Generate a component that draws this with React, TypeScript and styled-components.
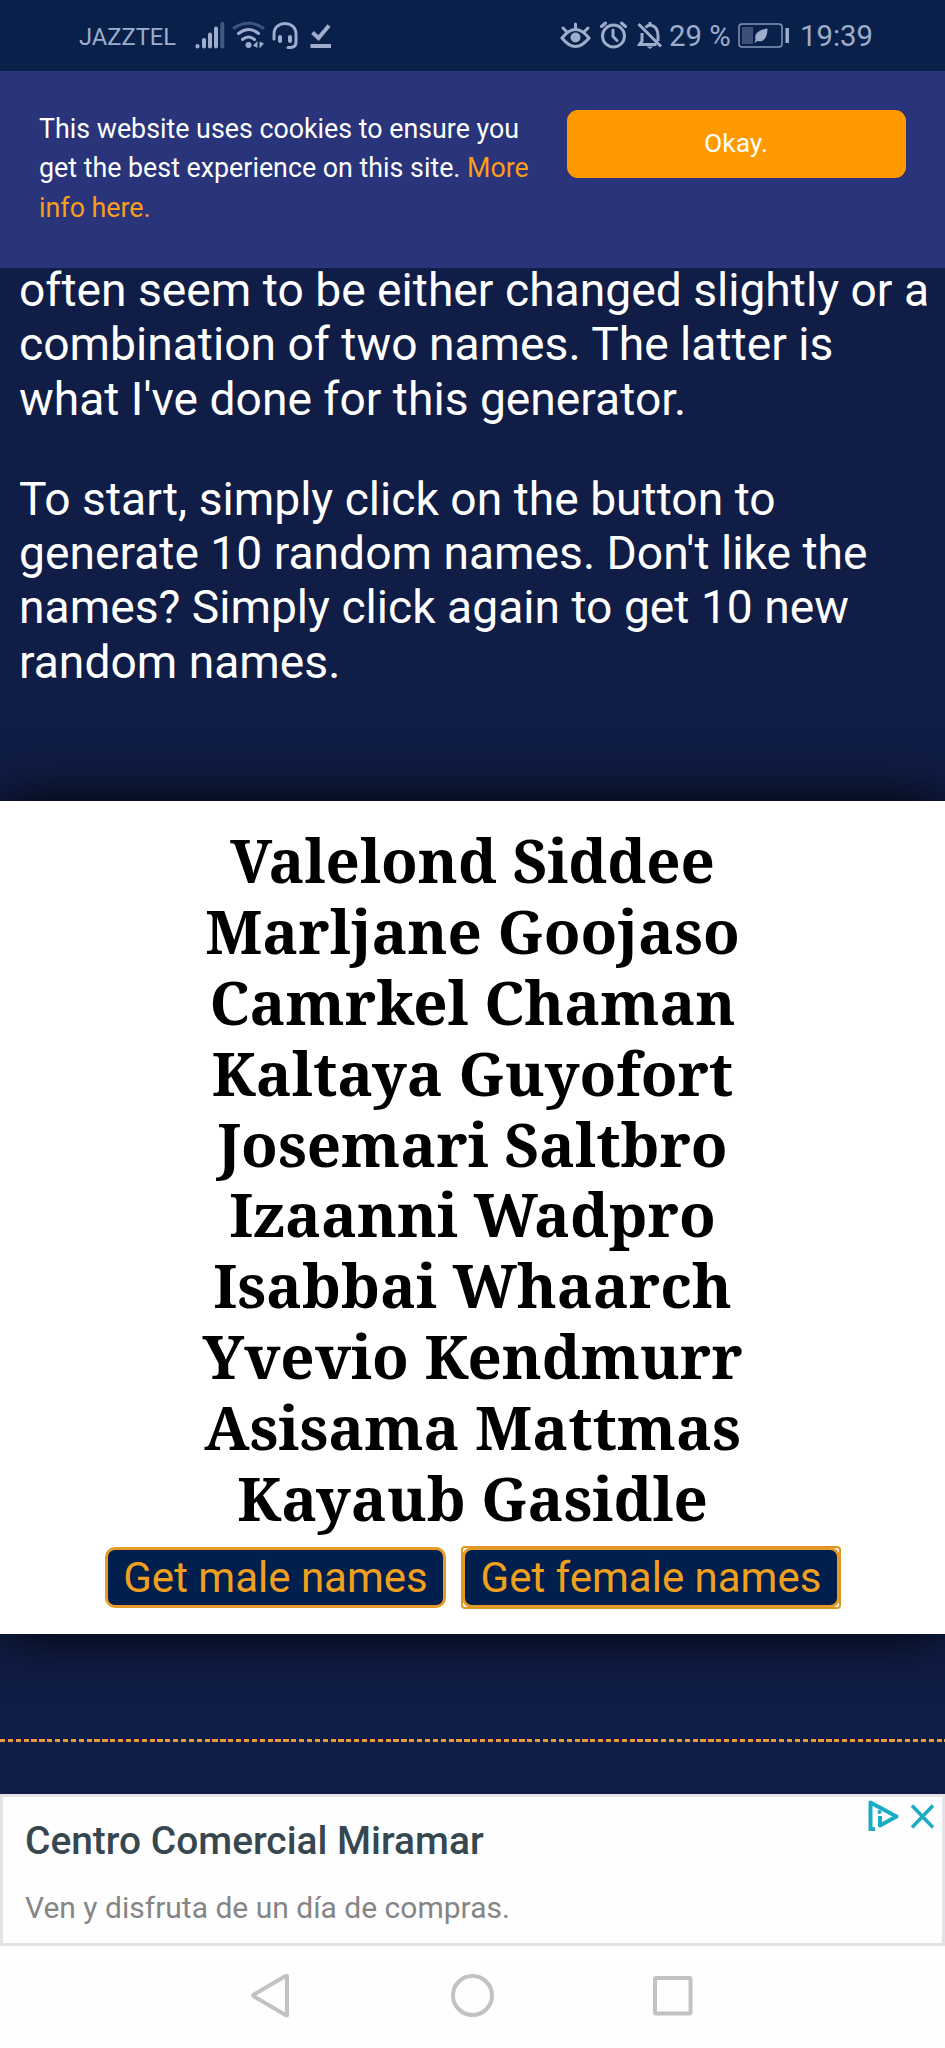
import React from "react";
import styled, { createGlobalStyle } from "styled-components";

const Global = createGlobalStyle`
  * { box-sizing: border-box; }
  body { margin: 0; background: #101d46; font-family: Roboto, "Liberation Sans", sans-serif; }
`;

const Screen = styled.div`
  width: 945px;
  height: 2048px;
  display: flex;
  flex-direction: column;
  overflow: hidden;
  background: #101d46;
`;

const StatusBar = styled.header`
  flex: none;
  height: 71px;
  padding: 0 74px 0 79px;
  display: flex;
  align-items: center;
  background: #08204a;
  color: #9dadcb;
  white-space: nowrap;
`;
const Carrier = styled.span`
  width: 116px;
  font-size: 23.7px;
  line-height: 30px;
  padding-top: 2px;
`;
const StatusText = styled.span<{ $w: number }>`
  width: ${(p) => p.$w}px;
  font-size: 29.3px;
  line-height: 36px;
  padding-top: 1px;
`;
const Spacer = styled.div`
  flex: 1;
`;
const Glyph = styled.svg<{ $gap?: number }>`
  display: block;
  flex: none;
  fill: none;
  stroke: #9dadcb;
  stroke-width: 3;
  margin-right: ${(p) => p.$gap ?? 0}px;
`;

const CookieBanner = styled.section`
  flex: none;
  height: 197px;
  padding: 39px 39.5px 0 39px;
  display: flex;
  justify-content: space-between;
  align-items: flex-start;
  background: #29347a;
`;
const CookieText = styled.p`
  margin: 0;
  font-size: 26.8px;
  line-height: 39.3px;
  color: #fff;
  white-space: nowrap;
`;
const CookieLink = styled.a`
  color: #f99d1c;
`;
const OkayButton = styled.button`
  width: 339px;
  height: 68px;
  padding: 0 0 3px;
  border: 0;
  border-radius: 11px;
  background: #ff9900;
  color: #fff;
  font: 26.5px Roboto, sans-serif;
`;

const Article = styled.main`
  flex: none;
  height: 538px;
  margin-top: -5px;
  padding: 0 0 0 19px;
  color: #fff;
  font-size: 46.2px;
  line-height: 54.3px;
  white-space: nowrap;
`;
const Paragraph = styled.p`
  margin: 0 0 46px;
`;

const Results = styled.section`
  flex: none;
  height: 833px;
  padding-top: 24px;
  background: #fff;
  box-shadow: 0 0 52px #000;
  display: flex;
  flex-direction: column;
  align-items: center;
`;
const Name = styled.div`
  height: 70.9px;
  line-height: 70.9px;
  color: #000;
  font-family: "Noto Serif", "DejaVu Serif Condensed", "DejaVu Serif", serif;
  font-size: 60px;
  font-weight: 700;
  white-space: nowrap;
`;
const ButtonRow = styled.div`
  display: flex;
  gap: 16px;
  margin-top: 13px;
`;
const NameButton = styled.button<{ $w: number }>`
  position: relative;
  width: ${(p) => p.$w}px;
  height: 61px;
  padding: 0;
  border: 3px solid #e59b26;
  border-radius: 10px;
  background: #001f4d;
  color: #f0a01e;
  font: 42px Roboto, sans-serif;
  white-space: nowrap;
`;
const FocusedNameButton = styled(NameButton)`
  &::after {
    content: "";
    position: absolute;
    inset: -4px;
    border: 2px solid #dd9722;
    border-radius: 4px;
  }
`;

const Divider = styled.div`
  flex: none;
  height: 3px;
  margin: 105px 0 52px;
  background: repeating-linear-gradient(90deg, #e89c3c 0 5.2px, transparent 5.2px 7.87px);
`;

const Ad = styled.aside`
  flex: none;
  height: 152px;
  padding: 0 8px 0 22px;
  border: 3px solid #e1e3e6;
  background: #fefefe;
  display: flex;
  justify-content: space-between;
`;
const AdTitle = styled.div`
  margin-top: 21px;
  font-size: 38.9px;
  line-height: 46px;
  font-weight: 500;
  color: #37474f;
  white-space: nowrap;
`;
const AdText = styled.div`
  margin-top: 26px;
  font-size: 30px;
  line-height: 36px;
  color: #858585;
  white-space: nowrap;
`;
const NavBar = styled.nav`
  flex: 1;
  display: flex;
  justify-content: center;
  padding-top: 24px;
  background: #fefefe;
`;

const names = [
  "Valelond Siddee",
  "Marljane Goojaso",
  "Camrkel Chaman",
  "Kaltaya Guyofort",
  "Josemari Saltbro",
  "Izaanni Wadpro",
  "Isabbai Whaarch",
  "Yvevio Kendmurr",
  "Asisama Mattmas",
  "Kayaub Gasidle",
];

const SignalIcon = () => (
  <Glyph width="30" height="31" viewBox="195 20 30 31" $gap={7} strokeLinecap="round">
    <g strokeWidth="4">
      <path d="M197.500 46v.5M204 40v6.500M210 34.500v12M216 28.500v18" />
      <path stroke="#425a83" d="M222.300 24v22.500" />
    </g>
  </Glyph>
);
const WifiIcon = () => (
  <Glyph width="33" height="31" viewBox="232 20 33 31" $gap={7} strokeLinecap="round">
    <path stroke="#3c5480" d="M234 28Q248.500 18.500 263 28" />
    <path d="M238.500 33.500q10-8 20 0M242.500 39.500q6-5 12 0" />
    <circle cx="248.500" cy="45" r="3" fill="#9dadcb" stroke="none" />
    <path d="M253 45.500l4.500-4.500v7zM264 43.500l-4.500 5v-7z" fill="#9dadcb" stroke="none" />
  </Glyph>
);
const HeadsetIcon = () => (
  <Glyph width="26" height="31" viewBox="272 20 26 31" $gap={12} strokeLinecap="round">
    <path d="M274 39v-5c0-14 22-14 22 0v8q0 5-5 5.500h-3" />
    <path strokeWidth="4" d="M280 37v4M290 37v4" />
  </Glyph>
);
const DoneIcon = () => (
  <Glyph width="22" height="31" viewBox="310 20 22 31">
    <path strokeWidth="4" d="M312.500 32.500l6 5.500L329 25.500M310.500 46h20.500" />
  </Glyph>
);
const EyeIcon = () => (
  <Glyph width="31" height="31" viewBox="560 20 31 31" $gap={9} strokeLinecap="round">
    <path d="M562 38q13.500-17 27 0q-13.500 17-27 0zM575.500 24v5M563 28l3.500 3.500M588 28l-3.500 3.500" />
    <circle cx="575.500" cy="37.500" r="5" fill="#9dadcb" stroke="none" />
  </Glyph>
);
const AlarmIcon = () => (
  <Glyph width="28" height="31" viewBox="600 20 28 31" $gap={9} strokeLinecap="round">
    <circle cx="613.500" cy="36" r="11" />
    <path d="M613 30v6.500l4 4M601.500 26.500l4-3.500M625.500 26.500l-4-3.500" />
  </Glyph>
);
const BellOffIcon = () => (
  <Glyph width="26" height="31" viewBox="637 20 26 31" $gap={6}>
    <path d="M638.500 24L661 46.500M642 33v8l-2.500 3.500h17M645.500 27.500q2-2 4.500-2.500q7.500 1 8 10v6M650 22v3" />
    <path d="M646.500 46.500h7l-3.500 2.500z" fill="#9dadcb" stroke="none" />
  </Glyph>
);
const BatteryIcon = () => (
  <Glyph width="52" height="31" viewBox="738 20 52 31" $gap={10}>
    <rect x="739" y="24" width="43" height="23" rx="3" strokeWidth="1.500" stroke="#8496b8" />
    <path d="M742 27h11v17h-11z" fill="#3e5078" stroke="none" />
    <path d="M767.500 28.500c-9 1.500-13.500 5-12 11l-1 3.500l3-2c6 1.500 10-3 10-12.500z" fill="#9dadcb" stroke="none" />
    <path d="M787.200 28v15" strokeWidth="3.500" />
  </Glyph>
);

const AdChoices = () => (
  <svg width="68" height="34" viewBox="866 1797 68 34" fill="none" stroke="#1aacc4" strokeWidth="4" strokeLinejoin="round">
    <path d="M875 1829l-4.500 .5v-27L896.500 1816.500L880 1825.500v-9.500" />
    <circle cx="879.500" cy="1812" r="2" fill="#1aacc4" stroke="none" />
    <path d="M912 1805.500l21 22M933 1805.500l-21 22" strokeWidth="3.500" />
  </svg>
);

const NavIcons = () => (
  <svg width="445" height="50" viewBox="250 1970 445 50" fill="none" stroke="#c2c2c2" strokeWidth="4" strokeLinejoin="round">
    <path d="M287 1976v39.500l-1.500-.5L254 1996.500q-2-1 0-2L285.500 1976z" />
    <circle cx="472.500" cy="1995.500" r="19.500" />
    <rect x="655" y="1978" width="35.500" height="35.500" rx="1" />
  </svg>
);

export default function App() {
  return (
    <Screen>
      <Global />
      <StatusBar>
        <Carrier>JAZZTEL</Carrier>
        <SignalIcon />
        <WifiIcon />
        <HeadsetIcon />
        <DoneIcon />
        <Spacer />
        <EyeIcon />
        <AlarmIcon />
        <BellOffIcon />
        <StatusText $w={69}>29 %</StatusText>
        <BatteryIcon />
        <StatusText $w={71}>19:39</StatusText>
      </StatusBar>
      <CookieBanner>
        <CookieText>
          This website uses cookies to ensure you
          <br />
          get the best experience on this site. <CookieLink>More</CookieLink>
          <br />
          <CookieLink>info here.</CookieLink>
        </CookieText>
        <OkayButton>Okay.</OkayButton>
      </CookieBanner>
      <Article>
        <Paragraph>
          often seem to be either changed slightly or a
          <br />
          combination of two names. The latter is
          <br />
          what I've done for this generator.
        </Paragraph>
        <Paragraph>
          To start, simply click on the button to
          <br />
          generate 10 random names. Don't like the
          <br />
          names? Simply click again to get 10 new
          <br />
          random names.
        </Paragraph>
      </Article>
      <Results>
        {names.map((n) => (
          <Name key={n}>{n}</Name>
        ))}
        <ButtonRow>
          <NameButton $w={341}>Get male names</NameButton>
          <FocusedNameButton $w={378}>Get female names</FocusedNameButton>
        </ButtonRow>
      </Results>
      <Divider />
      <Ad>
        <div>
          <AdTitle>Centro Comercial Miramar</AdTitle>
          <AdText>Ven y disfruta de un día de compras.</AdText>
        </div>
        <AdChoices />
      </Ad>
      <NavBar>
        <NavIcons />
      </NavBar>
    </Screen>
  );
}
